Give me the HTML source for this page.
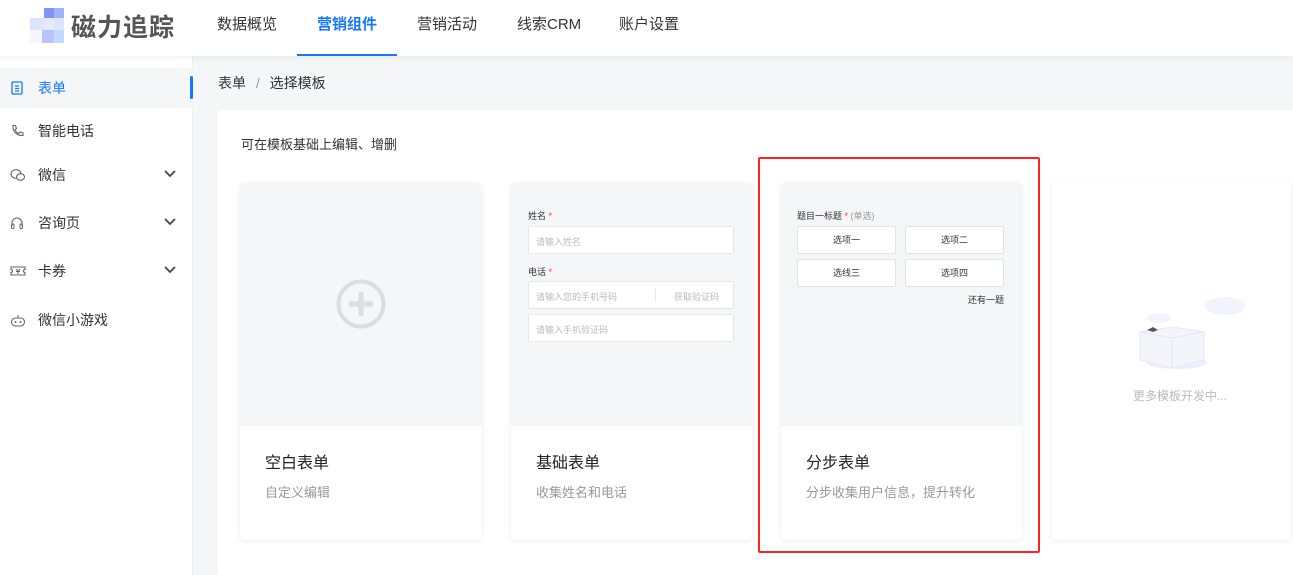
<!DOCTYPE html>
<html><head><meta charset="utf-8"><style>
*{margin:0;padding:0;box-sizing:border-box}
body{width:1293px;height:575px;overflow:hidden;background:#f5f6f7;font-family:"Liberation Sans","Noto Sans CJK SC",sans-serif;color:#333;position:relative}
.hdr{position:absolute;left:0;top:0;width:1293px;height:56px;background:#fff;box-shadow:0 2px 6px rgba(0,0,0,.05);z-index:2}
.logo{position:absolute;left:71px;top:8px;font-size:25px;color:#555;font-weight:bold;letter-spacing:1px}
.nav{position:absolute;top:13px;font-size:15px;color:#333}
.side{position:absolute;left:0;top:56px;width:193px;height:519px;background:#fff;border-right:1px solid #eee}
.it{position:absolute;left:0;width:193px;height:40px;font-size:14px;color:#333}
.it span{position:absolute;left:38px;top:10px}
.it svg{position:absolute;left:10px;top:13px}
.chev{position:absolute;left:164px;top:14px}
.panel{position:absolute;left:218px;top:110px;width:1075px;height:465px;background:#fff}
.card{position:absolute;top:183px;height:357px;background:#fff;border-radius:4px;box-shadow:0 1px 6px rgba(0,0,0,.08);overflow:hidden}
.card .pre{position:absolute;left:0;top:0;width:100%;height:243px;background:#f5f6f7}
.card .t{position:absolute;left:25px;top:266px;font-size:16px;color:#222}
.card .s{position:absolute;left:25px;top:299px;font-size:13px;color:#999}
.inp{position:absolute;background:#fff;border:1px solid #e8e8e8;border-radius:2px;font-size:9px;color:#bbb;padding:8px 7px;height:28px}
.lbl{position:absolute;font-size:9px;color:#333}
.opt{position:absolute;background:#fff;border:1px solid #e3e3e3;border-radius:2px;width:99px;height:28px;font-size:9px;text-align:center;line-height:26px;color:#333}
.r{color:#f33}
</style></head><body>
<div class="hdr">
<svg style="position:absolute;left:30px;top:8px" width="38" height="36"><rect x="14" y="0" width="10" height="10" fill="#7f93f5"/><rect x="24" y="0" width="10" height="10" fill="#9fb2fb"/><rect x="0" y="10" width="14" height="12" fill="#dfe4fd"/><rect x="14" y="10" width="10" height="12" fill="#e6eafd"/><rect x="24" y="10" width="10" height="12" fill="#dce5fe"/><rect x="0" y="22" width="12" height="13" fill="#f6f7fe"/><rect x="12" y="22" width="12" height="13" fill="#b7c3fb"/><rect x="24" y="22" width="10" height="13" fill="#c2dafd"/></svg>
<div class="logo">磁力追踪</div>
<div class="nav" style="left:217px">数据概览</div>
<div class="nav" style="left:317px;color:#1677ff;font-weight:bold">营销组件</div>
<div style="position:absolute;left:297px;top:54px;width:100px;height:2px;background:#1677ff"></div>
<div class="nav" style="left:417px">营销活动</div>
<div class="nav" style="left:517px">线索CRM</div>
<div class="nav" style="left:619px">账户设置</div>
</div>
<div class="side">
<div class="it" style="top:12px;background:#f5f6f7;color:#1677ff"><svg width="14" height="14"><rect x="2" y="1" width="10" height="12" rx="1" fill="none" stroke="#1677ff" stroke-width="1.3"/><path d="M5 5h4M5 7.5h4M5 10h4" stroke="#1677ff" stroke-width="1.2"/></svg><span>表单</span><div style="position:absolute;left:190px;top:8px;width:3px;height:23px;background:#1677ff;border-radius:2px"></div></div>
<div class="it" style="top:55px"><svg width="14" height="14"><path d="M3 1.5l2.5 0 1 3-1.5 1.2c.8 1.8 2 3 3.8 3.8l1.2-1.5 3 1v2.5c-6 .5-10.5-4-10-10z" fill="none" stroke="#666" stroke-width="1.1"/></svg><span>智能电话</span></div>
<div class="it" style="top:99px"><svg width="16" height="14"><ellipse cx="6" cy="6" rx="5" ry="4.3" fill="none" stroke="#666" stroke-width="1.1"/><ellipse cx="10.5" cy="9" rx="4" ry="3.3" fill="#fff" stroke="#666" stroke-width="1.1"/></svg><span>微信</span><svg class="chev" width="12" height="8" style="left:164px;top:15px"><path d="M1 1l5 5 5-5" fill="none" stroke="#444" stroke-width="1.8"/></svg></div>
<div class="it" style="top:147px"><svg width="14" height="14"><path d="M2 10V7a5 5 0 0110 0v3" fill="none" stroke="#666" stroke-width="1.1"/><rect x="1.5" y="8" width="2.5" height="4.5" rx="1" fill="none" stroke="#666"/><rect x="10" y="8" width="2.5" height="4.5" rx="1" fill="none" stroke="#666"/></svg><span>咨询页</span><svg class="chev" width="12" height="8" style="left:164px;top:15px"><path d="M1 1l5 5 5-5" fill="none" stroke="#444" stroke-width="1.8"/></svg></div>
<div class="it" style="top:195px"><svg width="16" height="14"><path d="M1 3h14v2.5a1.5 1.5 0 000 3V11H1V8.5a1.5 1.5 0 000-3z" fill="none" stroke="#666" stroke-width="1.1"/><path d="M6 5l2 2 2-2M8 7v3M6 7.5h4" stroke="#666" fill="none"/></svg><span>卡券</span><svg class="chev" width="12" height="8" style="left:164px;top:15px"><path d="M1 1l5 5 5-5" fill="none" stroke="#444" stroke-width="1.8"/></svg></div>
<div class="it" style="top:244px"><svg width="16" height="14"><rect x="1.5" y="5" width="13" height="8" rx="4" fill="none" stroke="#666" stroke-width="1.1"/><circle cx="5.5" cy="9" r="1" fill="#666"/><circle cx="10.5" cy="9" r="1" fill="#666"/><path d="M8 5V2" stroke="#666"/></svg><span>微信小游戏</span></div>
</div>
<div style="position:absolute;left:218px;top:73px;font-size:14px;color:#333">表单 <span style="color:#999;margin:0 6px">/</span> 选择模板</div>
<div class="panel"></div>
<div style="position:absolute;left:241px;top:134px;font-size:13px;color:#333">可在模板基础上编辑、增删</div>

<div class="card" style="left:240px;width:242px"><div class="pre"><svg style="position:absolute;left:96px;top:96px" width="50" height="50"><circle cx="25" cy="25" r="22.5" fill="none" stroke="#ddd" stroke-width="4"/><path d="M25 13v24M13 25h24" stroke="#ddd" stroke-width="5"/></svg></div><div class="t">空白表单</div><div class="s">自定义编辑</div></div>

<div class="card" style="left:511px;width:241px"><div class="pre">
<div class="lbl" style="left:17px;top:26px">姓名 <span class="r">*</span></div>
<div class="inp" style="left:17px;top:43px;width:206px">请输入姓名</div>
<div class="lbl" style="left:17px;top:82px">电话 <span class="r">*</span></div>
<div class="inp" style="left:17px;top:98px;width:206px">请输入您的手机号码<span style="position:absolute;left:126px;top:6px;height:14px;border-left:1px solid #e8e8e8"></span><span style="position:absolute;left:145px">获取验证码</span></div>
<div class="inp" style="left:17px;top:131px;width:206px">请输入手机验证码</div>
</div><div class="t">基础表单</div><div class="s">收集姓名和电话</div></div>

<div class="card" style="left:781px;width:241px"><div class="pre">
<div class="lbl" style="left:16px;top:26px">题目一标题 <span class="r">*</span> <span style="color:#999">(单选)</span></div>
<div class="opt" style="left:16px;top:43px">选项一</div>
<div class="opt" style="left:124px;top:43px">选项二</div>
<div class="opt" style="left:16px;top:76px">选线三</div>
<div class="opt" style="left:124px;top:76px">选项四</div>
<div class="lbl" style="left:187px;top:110px">还有一题</div>
</div><div class="t">分步表单</div><div class="s">分步收集用户信息，提升转化</div></div>

<div class="card" style="left:1052px;width:239px">
<svg style="position:absolute;left:55px;top:105px" width="140" height="90"><ellipse cx="52" cy="30" rx="12" ry="5" fill="#f1f4fa"/><ellipse cx="118" cy="18" rx="20" ry="9" fill="#f1f4fa"/><ellipse cx="70" cy="75" rx="30" ry="6" fill="#eceffb"/><path d="M33 44l32-5 32 5v28l-32 8-32-8z" fill="#f3f5fb" stroke="#e4e8f3"/><path d="M65 50v30M33 44l32 6 32-6" fill="none" stroke="#e4e8f3"/><path d="M40 42l6-3 5 3-5 2z" fill="#556"/></svg>
<div style="position:absolute;left:81px;top:204px;font-size:12px;color:#bbb">更多模板开发中...</div></div>

<div style="position:absolute;left:758px;top:157px;width:282px;height:396px;border:2px solid #f22;border-radius:2px"></div>
</body></html>
